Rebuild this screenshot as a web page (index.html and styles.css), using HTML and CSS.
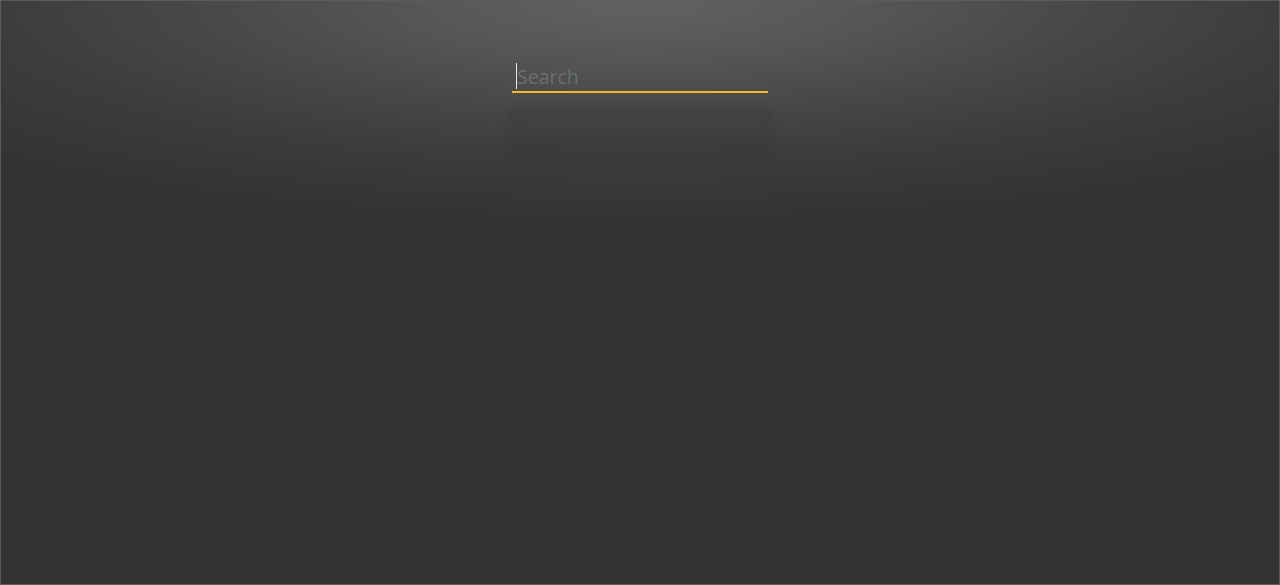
FILE: index.html
```html
<!DOCTYPE html>
<html>
<head>
<meta charset="utf-8">
<link rel="stylesheet" href="styles.css">
</head>
<body>
<div class="frame">
  <div class="search">
    <div class="field">
      <span class="caret"></span>
      <input class="input" type="text" placeholder="Search">
    </div>
    <div class="results"></div>
  </div>
</div>
</body>
</html>
```
FILE: styles.css
```css
html, body {
  margin: 0;
  padding: 0;
  height: 100%;
}
body {
  background: #333333;
  overflow: hidden;
}
.frame {
  box-sizing: border-box;
  width: 1280px;
  height: 585px;
  border: 1px solid #5c5c5c;
  background:
    radial-gradient(ellipse 920px 220px at 640px 0px, #616261 0%, #555655 25%, #464746 50%, #3b3c3b 72%, rgba(51,51,51,0) 100%),
    #333333;
  display: flex;
  justify-content: center;
}
.search {
  width: 256px;
  margin-top: 59px;
  display: flex;
  flex-direction: column;
}
.field {
  position: relative;
  height: 31px;
  border-bottom: 2px solid #f2b82a;
  display: flex;
  align-items: center;
}
.caret {
  position: absolute;
  left: 4px;
  top: 3px;
  width: 1px;
  height: 26px;
  background: #e8e8e8;
}
.input {
  flex: 1;
  box-sizing: border-box;
  background: transparent;
  border: none;
  outline: none;
  padding: 2px 0 0 5px;
  font-family: "Open Sans", "Noto Sans", sans-serif;
  font-size: 19.5px;
  color: #cccccc;
  height: 31px;
  caret-color: transparent;
}
.input::placeholder {
  color: #6c6f6f;
}
.results {
  margin-top: 14px;
  margin-left: -4px;
  width: 264px;
  height: 52px;
  border-radius: 12px;
  background: rgba(40, 42, 42, 0.1);
  box-shadow: 0 0 8px rgba(30, 30, 30, 0.08);
}
```
